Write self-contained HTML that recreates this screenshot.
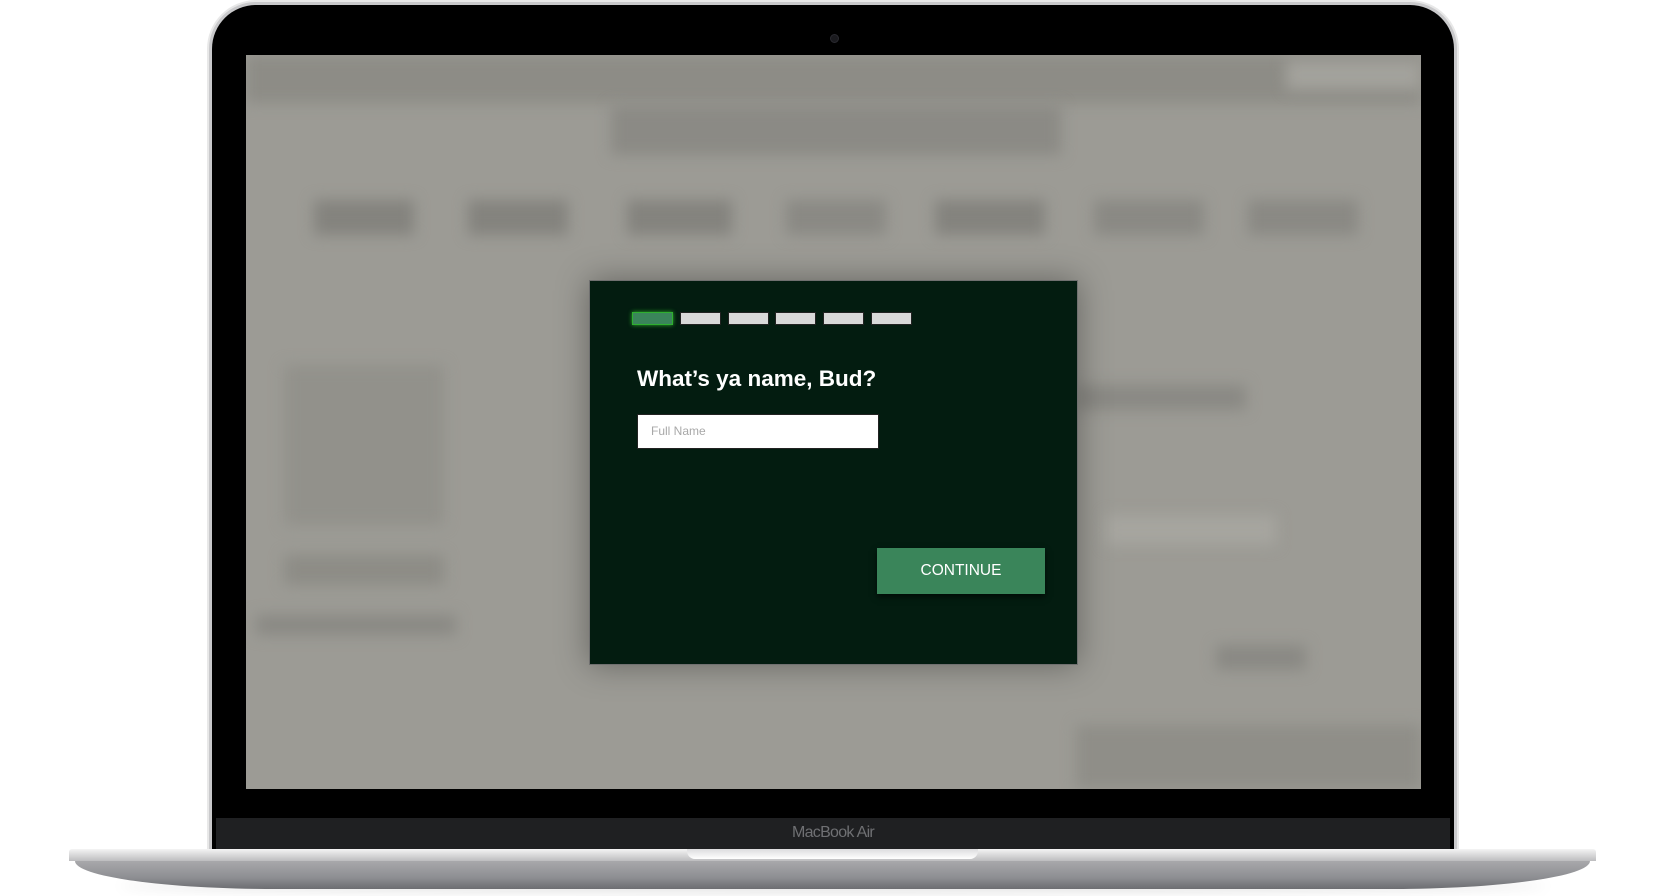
<!DOCTYPE html>
<html><head><meta charset="utf-8"><style>
html,body{margin:0;padding:0;background:#fff;width:1666px;height:896px;overflow:hidden;font-family:"Liberation Sans",Arial,sans-serif}
.abs{position:absolute}
#lid{left:212px;top:5px;width:1242px;height:850px;background:#000;border-radius:44px 44px 0 0;box-shadow:0 0 0 3px #c9c9cb,0 0 0 5px #e8e8e8}
#screen{left:246px;top:55px;width:1175px;height:734px;background:#9c9b95;overflow:hidden}
.b{position:absolute;background:#84837e;filter:blur(7px)}
#chin{left:216px;top:818px;width:1234px;height:34px;background:#1f2022}
#mb{left:0;width:1666px;top:824px;text-align:center;color:#6f7073;font-size:16px;letter-spacing:-0.7px}
#base{left:69px;top:849px;width:1527px;height:12px;background:linear-gradient(#f4f4f4,#bdbdbf);border-radius:3px 3px 0 0}
#base2{left:75px;top:861px;width:1515px;height:28px;background:linear-gradient(#a8a8ab,#8d8e92 60%,#6c6d71);border-radius:0 0 200px 200px/0 0 28px 28px}
#notch{left:687px;top:849px;width:291px;height:10px;background:linear-gradient(#dcdcde,#fff);border-radius:0 0 8px 8px}
#shadow{left:120px;top:880px;width:1426px;height:12px;background:rgba(0,0,0,.12);filter:blur(6px);border-radius:50%}
#modal{left:589px;top:280px;width:489px;height:385px;background:#031c10;border:1px solid #707070;box-sizing:border-box;box-shadow:0 0 30px rgba(0,0,0,.35)}
.bar{position:absolute;top:31px;width:39px;height:11px;background:#d9d9d9;border:1px solid #222}
h1{position:absolute;margin:0;left:47px;top:85px;color:#fff;font-size:22.5px;font-weight:bold;white-space:nowrap}
#inp{left:47px;top:133px;width:242px;height:35px;background:#fff;border:1px solid #222;box-sizing:border-box;color:#a8a8a8;font-size:12px;line-height:33px;padding-left:13px}
#btn{left:287px;top:267px;width:168px;height:46px;background:#3a855a;color:#fff;font-size:15.5px;text-align:center;line-height:46px;box-shadow:0 3px 6px rgba(0,0,0,.6)}
</style></head><body>
<div class="abs" id="shadow"></div>
<div class="abs" id="lid"></div>
<div class="abs" style="left:830px;top:34px;width:7px;height:7px;border-radius:50%;background:#1a1a1e;border:1px solid #2a2a30"></div>
<div class="abs" id="screen">
 <div class="b" style="left:0;top:0;width:1175px;height:48px;background:#8d8c86"></div>
 <div class="b" style="left:365px;top:50px;width:450px;height:50px;background:#8b8a85"></div>
 <div class="b" style="left:1040px;top:5px;width:135px;height:30px;background:#a3a29c"></div>
 <div class="b" style="left:68px;top:145px;width:100px;height:35px"></div>
 <div class="b" style="left:222px;top:145px;width:100px;height:35px"></div>
 <div class="b" style="left:381px;top:145px;width:105px;height:35px"></div>
 <div class="b" style="left:540px;top:145px;width:100px;height:35px;background:#8a8984"></div>
 <div class="b" style="left:689px;top:145px;width:110px;height:35px"></div>
 <div class="b" style="left:848px;top:145px;width:110px;height:35px;background:#8a8984"></div>
 <div class="b" style="left:1002px;top:145px;width:110px;height:35px;background:#8a8984"></div>
 <div class="b" style="left:38px;top:310px;width:160px;height:160px;background:#92918b"></div>
 <div class="b" style="left:38px;top:500px;width:160px;height:30px;background:#8d8c86"></div>
 <div class="b" style="left:10px;top:560px;width:200px;height:20px;background:#8a8984"></div>
 <div class="b" style="left:830px;top:330px;width:170px;height:25px;background:#8a8984"></div>
 <div class="b" style="left:860px;top:460px;width:170px;height:30px;background:#a6a59f"></div>
 <div class="b" style="left:970px;top:590px;width:90px;height:25px;background:#8a8984"></div>
 <div class="b" style="left:830px;top:670px;width:345px;height:64px;background:#8f8e88"></div>
</div>
<div class="abs" id="chin"></div>
<div class="abs" id="mb">MacBook Air</div>
<div class="abs" id="base2"></div>
<div class="abs" id="base"></div>
<div class="abs" id="notch"></div>
<div class="abs" id="modal">
 <div class="bar" style="left:42px;background:#3a855a;border-color:#2fb02f;box-shadow:0 0 4px #2fb02f"></div>
 <div class="bar" style="left:90px"></div>
 <div class="bar" style="left:138px"></div>
 <div class="bar" style="left:185px"></div>
 <div class="bar" style="left:233px"></div>
 <div class="bar" style="left:281px"></div>
 <h1>What’s ya name, Bud?</h1>
 <div class="abs" id="inp">Full Name</div>
 <div class="abs" id="btn">CONTINUE</div>
</div>
</body></html>
